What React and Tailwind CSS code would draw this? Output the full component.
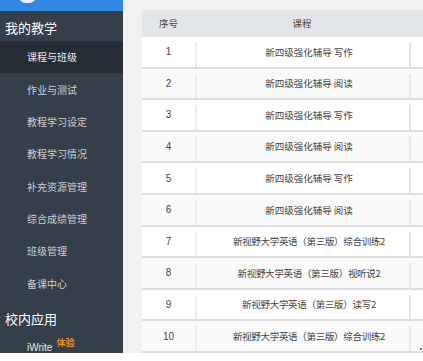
import React from "react";

const menu = ["课程与班级", "作业与测试", "教程学习设定", "教程学习情况", "补充资源管理", "综合成绩管理", "班级管理", "备课中心"];
const rows = [
  "新四级强化辅导 写作",
  "新四级强化辅导 阅读",
  "新四级强化辅导 写作",
  "新四级强化辅导 阅读",
  "新四级强化辅导 写作",
  "新四级强化辅导 阅读",
  "新视野大学英语（第三版）综合训练2",
  "新视野大学英语（第三版）视听说2",
  "新视野大学英语（第三版）读写2",
  "新视野大学英语（第三版）综合训练2",
];

export default function App() {
  return (
    <div
      className="w-[423px] h-[361px] bg-white overflow-hidden"
      style={{ fontFamily: '"Noto Sans CJK SC", "Noto Sans", sans-serif' }}
    >
      <div className="flex h-[353px]">
        <div className="w-[123px] shrink-0 bg-[#353f49] flex flex-col">
          <div className="h-[11px] bg-[#2f87e1] relative overflow-hidden">
            <div className="absolute left-[19px] top-[-10px] w-[17px] h-[13px] rounded-full bg-white opacity-90" />
          </div>
          <div className="h-[30px] flex items-center pl-[5px] text-[13px] text-white leading-none pt-[3px]">我的教学</div>
          {menu.map((m, i) => (
            <div
              key={m}
              className={`h-[32.4px] flex items-center pl-[27px] text-[10px] leading-none ${
                i === 0 ? "bg-[#262d35] text-[#e6e9ec]" : "text-[#c9ced3]"
              }`}
            >
              {m}
            </div>
          ))}
          <div className="h-[36px] flex items-center pl-[5px] text-[13px] text-white leading-none pt-[1px]">校内应用</div>
          <div className="flex-1 flex items-start pl-[27px] pt-[2px]">
            <span className="text-[10px] text-[#e6e9ec] leading-none mt-[5px]" style={{ fontFamily: '"Liberation Sans", sans-serif' }}>iWrite</span>
            <span className="text-[9px] font-bold text-[#f08a24] leading-none ml-[4px]">体验</span>
          </div>
        </div>
        <div className="flex-1 bg-[#f1f1f1] pt-[10px] pl-[19px] overflow-hidden relative">
          <div className="w-[320px] flex flex-col text-[9.5px] text-[#444]">
            <div className="h-[27px] bg-[#e2e5e9] flex items-center">
              <div className="w-[53px] text-center">序号</div>
              <div className="w-[214px] text-center">课程</div>
              <div className="flex-1" />
            </div>
            {rows.map((r, i) => (
              <div
                key={i}
                className={`h-[31.6px] flex border-b-2 border-[#dedede] ${i % 2 === 1 ? "bg-[#f9f9f9]" : "bg-white"}`}
              >
                <div className="w-[53px] flex items-center justify-center" style={{ fontFamily: '"Liberation Sans", sans-serif', fontSize: "10px" }}>{i + 1}</div>
                <div className="w-[214px] flex items-center justify-center border-l-2 border-[#ececec] mt-[5px] pb-[5px] pl-[12px]">
                  <span className={i >= 6 ? "tracking-[-0.3px]" : ""}>{r}</span>
                </div>
                <div className="flex-1 border-l-2 border-[#e6e6e6] mt-[5px]" />
              </div>
            ))}
          </div>
          <div className="absolute right-[1px] bottom-[3px] w-[2px] h-[2px] bg-[#777]" />
        </div>
      </div>
    </div>
  );
}
